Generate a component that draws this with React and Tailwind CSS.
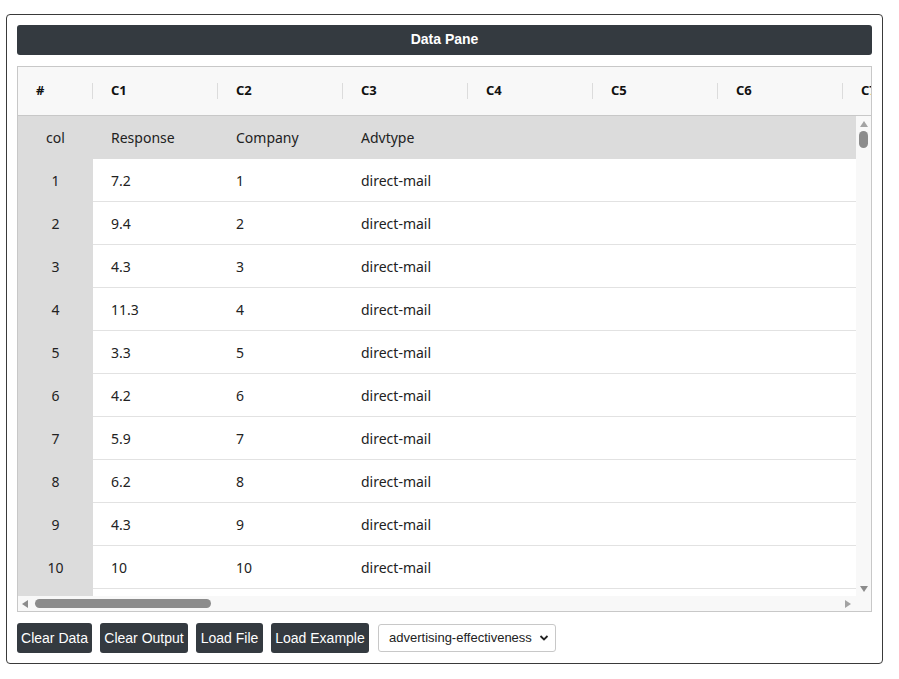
import React from 'react';

const rows = [
  ['7.2', '1'], ['9.4', '2'], ['4.3', '3'], ['11.3', '4'], ['3.3', '5'],
  ['4.2', '6'], ['5.9', '7'], ['6.2', '8'], ['4.3', '9'], ['10', '10'],
];

const heads = ['C1', 'C2', 'C3', 'C4', 'C5', 'C6', 'C7'];

const Cell = ({ children }) => (
  <div className="w-[125px] shrink-0 pl-[18px] flex items-center">{children}</div>
);

const App = () => {
  return (
    <div className="min-h-[679px] bg-white pt-[14px] pl-[6px]" style={{ fontFamily: '"Liberation Sans", Arial, sans-serif' }}>
      <div className="w-[877px] h-[650px] border border-[#3a3a3a] rounded-[4px] p-[10px] flex flex-col">
        {/* header bar */}
        <div className="h-[30px] bg-[#343a40] rounded-[3px] flex items-center justify-center text-white text-[14px] font-bold shrink-0 pb-[1px]">
          Data Pane
        </div>

        {/* grid */}
        <div className="mt-[11px] h-[546px] border border-[#c8c8c8] flex flex-col overflow-hidden text-[14px] text-[#222]" style={{ fontFamily: '"Noto Sans", "Open Sans", sans-serif' }}>
          <div className="h-[49px] shrink-0 bg-[#f8f8f8] border-b border-[#c8c8c8] flex overflow-hidden font-bold text-[13px] text-[#111]">
            <div className="w-[75px] shrink-0 pl-[18px] flex items-center relative">
              #
              <span className="absolute right-0 top-[16px] h-[16px] w-px bg-[#dcdcdc]" />
            </div>
            {heads.map((h) => (
              <div key={h} className="w-[125px] shrink-0 pl-[18px] flex items-center relative">
                {h}
                <span className="absolute right-0 top-[16px] h-[16px] w-px bg-[#dcdcdc]" />
              </div>
            ))}
          </div>

          <div className="flex-1 flex min-h-0">
            <div className="flex-1 overflow-hidden">
              <div className="h-[43px] bg-[#dcdcdc] flex">
                <div className="w-[75px] shrink-0 flex items-center justify-center">col</div>
                <Cell>Response</Cell>
                <Cell>Company</Cell>
                <Cell>Advtype</Cell>
              </div>
              {rows.map((r, i) => (
                <div key={i} className="h-[43px] flex">
                  <div className="w-[75px] shrink-0 bg-[#dcdcdc] flex items-center justify-center">{i + 1}</div>
                  <div className="flex-1 flex border-b border-[#e2e2e2]">
                    <Cell>{r[0]}</Cell>
                    <Cell>{r[1]}</Cell>
                    <Cell>direct-mail</Cell>
                  </div>
                </div>
              ))}
              <div className="h-[10px] flex">
                <div className="w-[75px] shrink-0 bg-[#dcdcdc]" />
              </div>
            </div>
            {/* vertical scrollbar */}
            <div className="w-[15px] shrink-0 bg-[#f8f8f8] flex flex-col items-center">
              <svg width="10" height="8" viewBox="0 0 10 8" className="mt-[4px]"><path d="M5 1L9 7H1z" fill="#a3a3a3" /></svg>
              <div className="mt-[3px] w-[9px] h-[17px] rounded-full bg-[#8c8c8c]" />
              <div className="flex-1" />
              <svg width="10" height="8" viewBox="0 0 10 8" className="mb-[3px]"><path d="M1 1H9L5 7z" fill="#8c8c8c" /></svg>
            </div>
          </div>

          {/* horizontal scrollbar */}
          <div className="h-[15px] shrink-0 flex items-center bg-[#f8f8f8]">
            <svg width="8" height="10" viewBox="0 0 8 10" className="ml-[3px]"><path d="M7 1V9L1 5z" fill="#8c8c8c" /></svg>
            <div className="ml-[6px] w-[176px] h-[9px] rounded-full bg-[#8c8c8c]" />
            <div className="flex-1" />
            <svg width="8" height="10" viewBox="0 0 8 10" className="mr-[19px]"><path d="M1 1V9L7 5z" fill="#a3a3a3" /></svg>
          </div>
        </div>

        {/* actions */}
        <div className="mt-[11px] flex items-center gap-[8px] text-[14px]">
          <button className="h-[30px] w-[75px] bg-[#343a40] text-white rounded-[3px] whitespace-nowrap">Clear Data</button>
          <button className="h-[30px] w-[88px] bg-[#343a40] text-white rounded-[3px] whitespace-nowrap">Clear Output</button>
          <button className="h-[30px] w-[67px] bg-[#343a40] text-white rounded-[3px] whitespace-nowrap">Load File</button>
          <button className="h-[30px] w-[98px] bg-[#343a40] text-white rounded-[3px] whitespace-nowrap">Load Example</button>
          <div className="ml-[1px] h-[28px] w-[178px] border border-[#c8c8c8] rounded-[3px] flex items-center justify-between pl-[10px] pr-[6px] text-[13px] text-[#222]">
            <span>advertising-effectiveness</span>
            <svg width="10" height="8" viewBox="0 0 10 8"><path d="M1.5 2L5 5.5L8.5 2" stroke="#222" strokeWidth="1.8" fill="none" /></svg>
          </div>
        </div>
      </div>
    </div>
  );
};

export default App;
